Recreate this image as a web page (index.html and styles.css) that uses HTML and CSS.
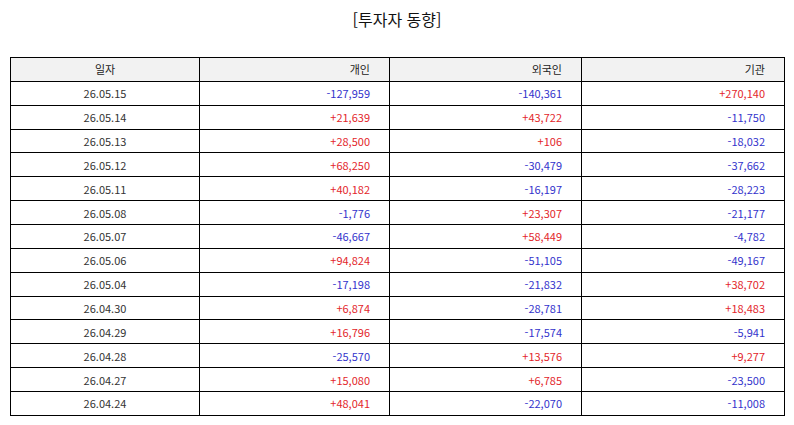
FILE: index.html
```html
<!DOCTYPE html>
<html lang="ko">
<head>
<meta charset="utf-8">
<link rel="stylesheet" href="styles.css">
</head>
<body>
<div class="page">
  <h1 class="title">[투자자 동향]</h1>
  <table class="flow">
    <colgroup>
      <col class="c1"><col class="c2"><col class="c3"><col class="c4">
    </colgroup>
    <thead>
      <tr><th class="date">일자</th><th>개인</th><th>외국인</th><th>기관</th></tr>
    </thead>
    <tbody>
      <tr><td class="date">26.05.15</td><td class="dn">-127,959</td><td class="dn">-140,361</td><td class="up">+270,140</td></tr>
      <tr><td class="date">26.05.14</td><td class="up">+21,639</td><td class="up">+43,722</td><td class="dn">-11,750</td></tr>
      <tr><td class="date">26.05.13</td><td class="up">+28,500</td><td class="up">+106</td><td class="dn">-18,032</td></tr>
      <tr><td class="date">26.05.12</td><td class="up">+68,250</td><td class="dn">-30,479</td><td class="dn">-37,662</td></tr>
      <tr><td class="date">26.05.11</td><td class="up">+40,182</td><td class="dn">-16,197</td><td class="dn">-28,223</td></tr>
      <tr><td class="date">26.05.08</td><td class="dn">-1,776</td><td class="up">+23,307</td><td class="dn">-21,177</td></tr>
      <tr><td class="date">26.05.07</td><td class="dn">-46,667</td><td class="up">+58,449</td><td class="dn">-4,782</td></tr>
      <tr><td class="date">26.05.06</td><td class="up">+94,824</td><td class="dn">-51,105</td><td class="dn">-49,167</td></tr>
      <tr><td class="date">26.05.04</td><td class="dn">-17,198</td><td class="dn">-21,832</td><td class="up">+38,702</td></tr>
      <tr><td class="date">26.04.30</td><td class="up">+6,874</td><td class="dn">-28,781</td><td class="up">+18,483</td></tr>
      <tr><td class="date">26.04.29</td><td class="up">+16,796</td><td class="dn">-17,574</td><td class="dn">-5,941</td></tr>
      <tr><td class="date">26.04.28</td><td class="dn">-25,570</td><td class="up">+13,576</td><td class="up">+9,277</td></tr>
      <tr><td class="date">26.04.27</td><td class="up">+15,080</td><td class="up">+6,785</td><td class="dn">-23,500</td></tr>
      <tr><td class="date">26.04.24</td><td class="up">+48,041</td><td class="dn">-22,070</td><td class="dn">-11,008</td></tr>
    </tbody>
  </table>
</div>
</body>
</html>
```
FILE: styles.css
```css
html, body {
  margin: 0;
  padding: 0;
  background: #ffffff;
}
body {
  font-family: "Noto Sans CJK KR", "Noto Sans", sans-serif;
  color: #333333;
}
.page {
  padding: 8px 10px 0 10px;
}
.title {
  margin: 0;
  height: 49px;
  font-size: 16px;
  font-weight: normal;
  line-height: 22px;
  text-align: center;
  color: #111111;
}
.flow {
  width: 774px;
  border-collapse: collapse;
  table-layout: fixed;
  font-size: 11px;
}
.c1 { width: 189px; }
.c2 { width: 190px; }
.c3 { width: 192px; }
.c4 { width: 203px; }
.flow th,
.flow td {
  border: 1px solid #000000;
  height: 22.87px;
  padding: 0 19px 0 4px;
  text-align: right;
  font-weight: normal;
  line-height: 14px;
}
.flow th {
  background: #f2f2f2;
  color: #222222;
}
.flow .date {
  text-align: center;
  padding: 0 4px;
}
.up { color: #e3262b; }
.dn { color: #3333cc; }
```
